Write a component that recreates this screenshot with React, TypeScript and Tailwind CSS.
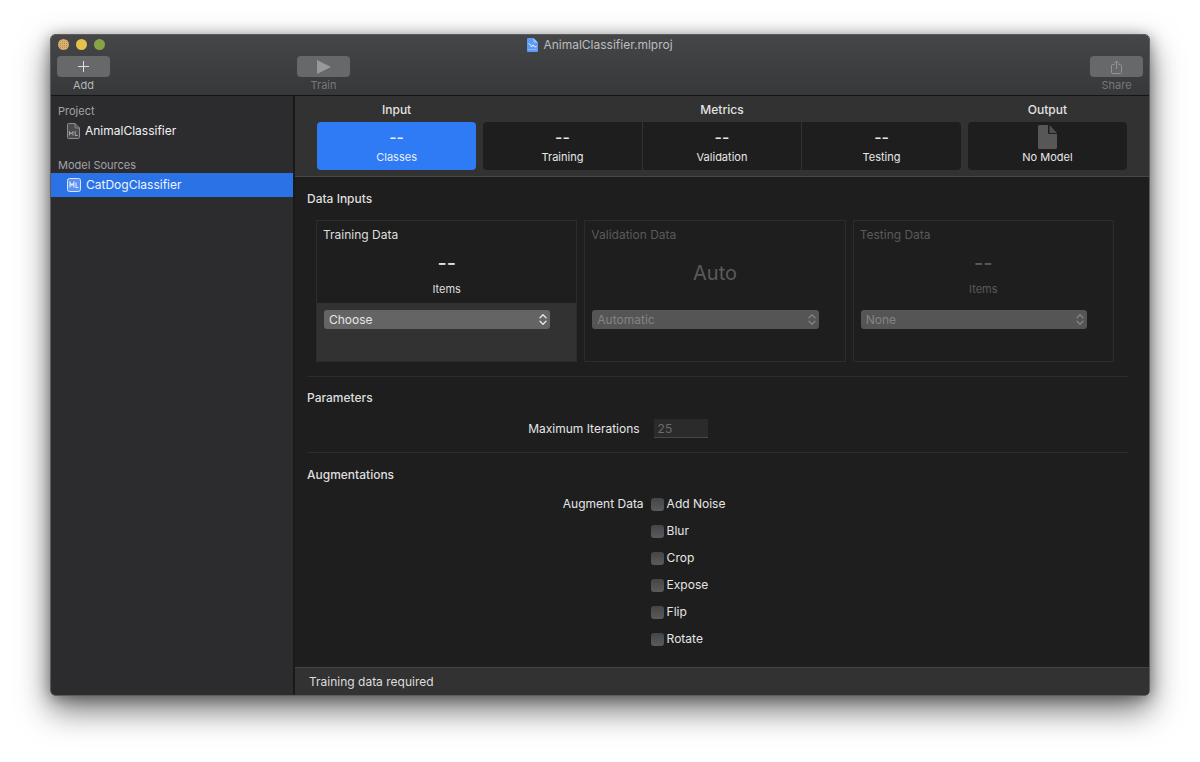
import type { ReactNode } from 'react';
import { clsx } from 'clsx';

const METRICS = ['Training', 'Validation', 'Testing'];

const AUGMENTATIONS = ['Add Noise', 'Blur', 'Crop', 'Expose', 'Flip', 'Rotate'];

const DATA_INPUTS = [
  { title: 'Training Data', value: '--', caption: 'Items', option: 'Choose', active: true },
  { title: 'Validation Data', value: 'Auto', caption: '', option: 'Automatic', active: false },
  { title: 'Testing Data', value: '--', caption: 'Items', option: 'None', active: false },
];

function CloseLight() {
  return (
    <svg className="size-[11px]" viewBox="0 0 11 11">
      <defs>
        <pattern id="close-dots" width="2" height="2" patternUnits="userSpaceOnUse">
          <rect width="2" height="2" fill="#e3b757" />
          <rect width="1" height="1" fill="#b58d5a" />
          <rect x="1" y="1" width="1" height="1" fill="#cbab98" />
        </pattern>
      </defs>
      <circle cx="5.5" cy="5.5" r="5.5" fill="url(#close-dots)" />
    </svg>
  );
}

function ProjectFileIcon() {
  return (
    <svg className="h-[14px] w-[11px]" viewBox="0 0 11 14">
      <path d="M1 0h5.5L11 4.5V13a1 1 0 0 1-1 1H1a1 1 0 0 1-1-1V1a1 1 0 0 1 1-1z" fill="#5f9bf5" />
      <path d="M6.5 0L11 4.5H7.5a1 1 0 0 1-1-1z" fill="#9cc2fa" />
      <path d="M1.5 5.5l1.7 1 1.3 2.3 1.5-2 1.4 2.2 2.2-.6" fill="none" stroke="#e6effd" strokeWidth="1" />
      <path d="M1.5 11.5h8" stroke="#8db8f8" strokeWidth="1" />
    </svg>
  );
}

function DocumentMlIcon() {
  return (
    <svg className="h-4 w-[13px] shrink-0" viewBox="0 0 13 16" fill="none" stroke="#8e8e90">
      <path d="M1.5.5H8L12.5 5v9.5a1 1 0 0 1-1 1h-10a1 1 0 0 1-1-1v-13a1 1 0 0 1 1-1z" fill="#4a4a4c" />
      <path d="M8 .5V4a1 1 0 0 0 1 1h3.5" />
      <path d="M2.5 12.5v-4l1.7 2.500 1.7-2.500v4M8.2 8v4.500h2.6" stroke="#a8a8aa" />
    </svg>
  );
}

function ModelMlIcon() {
  return (
    <svg className="h-[14px] w-[14px] shrink-0" viewBox="0 0 14 14" fill="none" stroke="#d7e5fd">
      <rect x=".5" y=".5" width="13" height="13" rx="2" fill="#5c93f2" />
      <path d="M3 9.500v-5l1.900 3 1.900-3v5M9 4.500v5h2.500" strokeWidth="1.200" />
    </svg>
  );
}

function PageIcon() {
  return (
    <svg className="h-6 w-[19px]" viewBox="0 0 19 24">
      <path d="M1.5 0H10v7.500A1.5 1.5 0 0 0 11.500 9H19v13.500a1.5 1.5 0 0 1-1.500 1.500h-16A1.5 1.5 0 0 1 0 22.500v-21A1.5 1.5 0 0 1 1.5 0z" fill="#575757" />
      <path d="M11.5 0L19 8h-7.500z" fill="#505050" />
    </svg>
  );
}

function ToolbarButton({ label, disabled, children }: { label: string; disabled?: boolean; children: ReactNode }) {
  return (
    <button
      type="button"
      disabled={disabled}
      className={clsx('flex w-[53px] flex-col items-center text-[11px]', disabled ? 'text-[#77787a]' : 'text-[#b4b5b6]')}
    >
      <span className="flex h-[21px] w-full items-center justify-center rounded bg-[#67686a]">{children}</span>
      <span className="leading-4">{label}</span>
    </button>
  );
}

function TitleBar() {
  return (
    <header className="border-b border-black/70 bg-linear-to-b from-[#454648] to-[#37383a] px-[6px] pb-[2px]">
      <div className="mb-[2px] grid h-[19px] grid-cols-3 items-center">
        <div className="flex gap-[7px] pl-px">
          <CloseLight />
          <span className="size-[11px] rounded-full bg-[#e5c04c]" />
          <span className="size-[11px] rounded-full bg-[#88a346]" />
        </div>
        <h1 className="flex items-center justify-center gap-[5px] text-xs text-[#bcbdbe]">
          <ProjectFileIcon />
          AnimalClassifier.mlproj
        </h1>
      </div>
      <div className="flex">
        <div className="w-60">
          <ToolbarButton label="Add">
            <svg className="size-[11px]" viewBox="0 0 11 11" stroke="#dedede">
              <path d="M5.5 0v11M0 5.500h11" />
            </svg>
          </ToolbarButton>
        </div>
        <ToolbarButton label="Train" disabled>
          <svg className="h-[14px] w-[14px]" viewBox="0 0 14 14">
            <path d="M0 0l14 7-14 7z" fill="#98999a" />
          </svg>
        </ToolbarButton>
        <div className="ml-auto">
          <ToolbarButton label="Share" disabled>
            <svg className="h-[14px] w-[11px]" viewBox="0 0 11 14" fill="none" stroke="#929394">
              <path d="M3.5 4.500h-2a1 1 0 0 0-1 1v7a1 1 0 0 0 1 1h8a1 1 0 0 0 1-1v-7a1 1 0 0 0-1-1h-2M5.500 9V1M3 3.500L5.500 1 8 3.500" />
            </svg>
          </ToolbarButton>
        </div>
      </div>
    </header>
  );
}

function SidebarItem({ icon, label, selected }: { icon: ReactNode; label: string; selected?: boolean }) {
  return (
    <button
      type="button"
      className={clsx(
        'flex h-6 w-full items-center gap-[5px] pl-4 text-xs',
        selected ? 'bg-[#2b72e6] text-[#eef4fe]' : 'text-[#f2f2f2]'
      )}
    >
      {icon}
      {label}
    </button>
  );
}

function Sidebar() {
  return (
    <aside className="w-[244px] shrink-0 border-r-2 border-[#1a1a1a] bg-[#2c2c2f]">
      <h2 className="px-[7px] pt-[7px] text-[11px] leading-4 text-[#a3a3a5]">Project</h2>
      <SidebarItem icon={<DocumentMlIcon />} label="AnimalClassifier" />
      <h2 className="px-[7px] pt-[14px] text-[11px] leading-4 text-[#a3a3a5]">Model Sources</h2>
      <SidebarItem icon={<ModelMlIcon />} label="CatDogClassifier" selected />
    </aside>
  );
}

function Tab({ label, selected, children = '--' }: { label: string; selected?: boolean; children?: ReactNode }) {
  return (
    <button
      type="button"
      className={clsx(
        'flex h-12 flex-1 flex-col items-center text-[11px]',
        selected ? 'bg-[#2f7bf6] text-[#e6effe]' : 'bg-[#1e1e1e] text-[#e8e8e8]'
      )}
    >
      <span className="flex h-[27px] items-end text-base font-medium leading-6">{children}</span>
      <span className="leading-4">{label}</span>
    </button>
  );
}

function TabGroup({ title, wide, children }: { title: string; wide?: boolean; children: ReactNode }) {
  return (
    <section className={wide ? 'flex-3' : 'flex-1'}>
      <h2 className="h-[26px] pt-[6px] text-center text-xs font-medium leading-4 text-[#e2e2e2]">{title}</h2>
      <div className="flex gap-px overflow-hidden rounded">{children}</div>
    </section>
  );
}

function DataCard({ title, value, caption, option, active }: (typeof DATA_INPUTS)[number]) {
  return (
    <section className={clsx('border border-[#2c2c2c]', active ? 'text-[#dedede]' : 'text-[#5a5a5a]')}>
      <div className="flex h-[82px] flex-col px-[6px] pt-[6px]">
        <h3 className="text-xs leading-4">{title}</h3>
        <div className="flex flex-1 flex-col items-center text-[11px]">
          {caption ? (
            <>
              <span className="pt-2 text-xl font-medium leading-6">{value}</span>
              <span className="pt-[6px] leading-4">{caption}</span>
            </>
          ) : (
            <span className="pt-4 text-xl leading-7">{value}</span>
          )}
        </div>
      </div>
      <div className={clsx('h-[58px] pt-[7px] pr-[26px] pl-[7px]', active && 'bg-[#323232]')}>
        <div className="relative">
          <select
            aria-label={title}
            disabled={!active}
            className={clsx(
              'block h-[19px] w-full appearance-none rounded-[3px] px-[5px] text-xs leading-4',
              active ? 'bg-[#646464] text-[#e6e6e6]' : 'bg-[#555555] text-[#838383] opacity-100'
            )}
          >
            <option>{option}</option>
          </select>
          <svg
            className="pointer-events-none absolute top-1 right-[3px] h-[11px] w-2"
            viewBox="0 0 8 11"
            fill="none"
            stroke={active ? '#e6e6e6' : '#838383'}
            strokeWidth="1.3"
            strokeLinecap="round"
            strokeLinejoin="round"
          >
            <path d="M1 3.800L4 .8l3 3M1 7.200l3 3 3-3" />
          </svg>
        </div>
      </div>
    </section>
  );
}

function SectionTitle({ children }: { children: ReactNode }) {
  return <h2 className="text-xs font-medium leading-4 text-[#dedede]">{children}</h2>;
}

export default function App() {
  return (
    <div className="flex min-h-screen bg-white px-[50px] pt-[34px] pb-[66px] font-['Inter','Liberation_Sans',sans-serif]">
      <div className="flex min-w-0 flex-1 flex-col overflow-hidden rounded-[5px] border border-[#5c5c5d] shadow-[0_14px_32px_rgba(0,0,0,0.55),0_2px_14px_rgba(0,0,0,0.35)]">
        <TitleBar />
        <div className="flex flex-1">
          <Sidebar />
          <main className="flex min-w-0 flex-1 flex-col bg-[#1e1e1e]">
            <nav className="flex gap-[7px] border-b border-[#474747] bg-[#323232] px-[22px] pb-[6px]">
              <TabGroup title="Input">
                <Tab label="Classes" selected />
              </TabGroup>
              <TabGroup title="Metrics" wide>
                {METRICS.map((label) => (
                  <Tab key={label} label={label} />
                ))}
              </TabGroup>
              <TabGroup title="Output">
                <Tab label="No Model">
                  <PageIcon />
                </Tab>
              </TabGroup>
            </nav>

            <div className="flex-1 pr-[21px] pl-3">
              <section className="border-b border-[#2c2c2c] pt-[14px] pb-[14px]">
                <SectionTitle>Data Inputs</SectionTitle>
                <div className="grid grid-cols-3 gap-[7px] pt-[13px] pr-[14px] pl-[9px]">
                  {DATA_INPUTS.map((input) => (
                    <DataCard key={input.title} {...input} />
                  ))}
                </div>
              </section>

              <section className="border-b border-[#2c2c2c] pt-[13px] pb-[14px]">
                <SectionTitle>Parameters</SectionTitle>
                <div className="flex items-center pt-[13px] text-xs text-[#e6e6e6]">
                  <label htmlFor="iterations" className="w-[41%] pr-1 text-right">
                    Maximum Iterations
                  </label>
                  <input
                    id="iterations"
                    type="text"
                    defaultValue="25"
                    disabled
                    className="ml-[10px] h-[19px] w-[54px] border-b border-[#484848] bg-[#2b2b2b] px-1 text-[#6b6b6b]"
                  />
                </div>
              </section>

              <section className="pt-[14px] pb-[15px]">
                <SectionTitle>Augmentations</SectionTitle>
                <fieldset className="flex pt-[13px] text-xs leading-4 text-[#e6e6e6]" aria-labelledby="augment">
                  <div id="augment" className="w-[41%] text-right">
                    Augment Data
                  </div>
                  <div className="flex flex-col items-start gap-[11px] pl-[7px]">
                    {AUGMENTATIONS.map((name) => (
                      <label key={name} className="flex items-center gap-[3px]">
                        <input
                          type="checkbox"
                          className="size-[13px] appearance-none rounded-[3px] bg-linear-to-b from-[#454545] to-[#5b5b5b] checked:from-[#2f7bf6] checked:to-[#2b72e6]"
                        />
                        {name}
                      </label>
                    ))}
                  </div>
                </fieldset>
              </section>
            </div>

            <footer className="border-t border-[#444444] bg-[#323232] px-[14px] pt-[6px] pb-[5px] text-xs leading-4 text-[#dedede]">
              Training data required
            </footer>
          </main>
        </div>
      </div>
    </div>
  );
}
